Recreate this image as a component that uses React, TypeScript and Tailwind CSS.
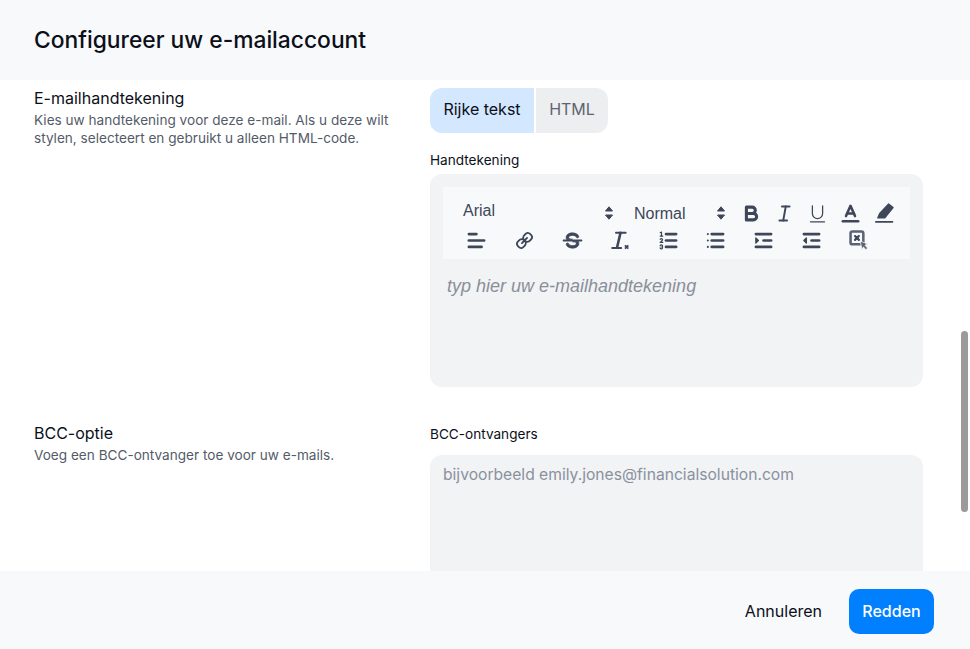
import React from "react";

const C = "#3d4759";
const s = { stroke: C, strokeWidth: 2, strokeLinecap: "round" as const, strokeLinejoin: "round" as const, fill: "none" };
const thin = { ...s, strokeWidth: 1 };

function Ic({ children }: { children: React.ReactNode }) {
  return (
    <svg viewBox="0 0 18 18" className="w-[23px] h-[23px] shrink-0">
      {children}
    </svg>
  );
}

const Bold = () => (
  <Ic>
    <path {...s} strokeWidth={2.4} d="M5,4H9.5A2.5,2.5,0,0,1,12,6.5v0A2.5,2.5,0,0,1,9.5,9H5V4Z" />
    <path {...s} strokeWidth={2.4} d="M5,9h5.5A2.5,2.5,0,0,1,13,11.5v0A2.5,2.5,0,0,1,10.5,14H5V9Z" />
  </Ic>
);
const Italic = () => (
  <Ic>
    <line {...s} strokeWidth={1.5} x1="7" x2="13" y1="3.5" y2="3.5" />
    <line {...s} strokeWidth={1.5} x1="5" x2="11" y1="14.5" y2="14.5" />
    <line {...s} strokeWidth={1.5} x1="8" x2="10" y1="14.5" y2="3.5" />
  </Ic>
);
const Underline = () => (
  <Ic>
    <path {...thin} d="M5,3V9a4,4,0,0,0,4,4H9a4,4,0,0,0,4-4V3" />
    <rect fill={C} height="1" rx=".5" ry=".5" width="12" x="3" y="15" />
  </Ic>
);
const Color = () => (
  <Ic>
    <line {...s} x1="3" x2="15" y1="15" y2="15" />
    <polyline {...s} points="5.5 11 9 3 12.5 11" />
    <line {...s} x1="11.63" x2="6.38" y1="9" y2="9" />
  </Ic>
);
const Highlight = () => (
  <Ic>
    <line {...s} strokeWidth={1.4} x1="3" x2="16" y1="15.5" y2="15.5" />
    <polygon fill={C} stroke={C} strokeLinejoin="round" strokeWidth={1} points="13,1.5 16.5,4.3 10,12.5 4.5,12.5 6,9" />
  </Ic>
);
const Align = () => (
  <Ic>
    <line {...s} x1="3" x2="15" y1="9" y2="9" />
    <line {...s} x1="3" x2="13" y1="14" y2="14" />
    <line {...s} x1="3" x2="9" y1="4" y2="4" />
  </Ic>
);
const LinkI = () => (
  <Ic>
    <g transform="translate(18,0) scale(-1,1)">
      <line {...s} strokeWidth={1.5} x1="7" x2="11" y1="7" y2="11" />
      <path {...s} strokeWidth={1.5} d="M8.9,4.577a3.476,3.476,0,0,1,.36,4.679A3.476,3.476,0,0,1,4.577,8.9C3.185,7.5,2.035,6.4,4.217,4.217S7.5,3.185,8.9,4.577Z" />
      <path {...s} strokeWidth={1.5} d="M13.423,9.1a3.476,3.476,0,0,0-4.679-.36,3.476,3.476,0,0,0,.36,4.679c1.392,1.392,2.5,2.542,4.679.36S14.815,10.5,13.423,9.1Z" />
    </g>
  </Ic>
);
const Strike = () => (
  <Ic>
    <line {...s} strokeWidth={1.4} x1="16" x2="2" y1="9" y2="9" />
    <path fill={C} stroke={C} strokeWidth={0.5} d="M9.007,8C6.542,7.791,6,7.519,6,6.5,6,5.792,7.283,5,9,5c1.571,0,2.765.679,2.969,1.309a1,1,0,0,0,1.9-.617C13.356,4.106,11.354,3,9,3,6.2,3,4,4.538,4,6.5a3.2,3.2,0,0,0,.5,1.843Z" />
    <path fill={C} stroke={C} strokeWidth={0.5} d="M8.984,10C11.457,10.208,12,10.479,12,11.5c0,.708-1.283,1.5-3,1.5-1.571,0-2.765-.679-2.969-1.309a1,1,0,1,0-1.9.617C4.644,13.894,6.646,15,9,15c2.8,0,5-1.538,5-3.5a3.2,3.2,0,0,0-.5-1.843Z" />
  </Ic>
);
const Clean = () => (
  <Ic>
    <line {...s} strokeWidth={1.6} x1="5.5" x2="13" y1="3" y2="3" />
    <line {...s} strokeWidth={2} x1="6.3" x2="9" y1="14.5" y2="3" />
    <line {...s} strokeWidth={1.6} x1="2.5" x2="9.5" y1="14.8" y2="14.8" />
    <path stroke={C} strokeWidth={1.4} d="M12.5 12.8l2.6 2.6M15.1 12.8l-2.6 2.6" fill="none" />
  </Ic>
);
const Ordered = () => (
  <Ic>
    <line {...s} x1="7" x2="15" y1="4" y2="4" />
    <line {...s} x1="7" x2="15" y1="9" y2="9" />
    <line {...s} x1="7" x2="15" y1="14" y2="14" />
    <line {...thin} x1="2.5" x2="4.5" y1="5.5" y2="5.5" />
    <path fill={C} d="M3.5,6A0.5,0.5,0,0,1,3,5.5V3.085l-0.276.138A0.5,0.5,0,0,1,2.053,3c-0.124-.247-0.023-0.324.224-0.447l1-.5A0.5,0.5,0,0,1,4,2.5v3A0.5,0.5,0,0,1,3.5,6Z" />
    <path {...thin} d="M4.5,10.5h-2c0-.234,1.85-1.076,1.85-2.234A0.959,0.959,0,0,0,2.5,8.156" />
    <path {...thin} d="M2.5,14.846a0.959,0.959,0,0,0,1.85-.109A0.7,0.7,0,0,0,3.75,14a0.688,0.688,0,0,0,.6-0.736,0.959,0.959,0,0,0-1.85-.109" />
  </Ic>
);
const Bullet = () => (
  <Ic>
    <line {...s} x1="6" x2="15" y1="4" y2="4" />
    <line {...s} x1="6" x2="15" y1="9" y2="9" />
    <line {...s} x1="6" x2="15" y1="14" y2="14" />
    <line {...s} strokeWidth={1.6} x1="3" x2="3" y1="4" y2="4" />
    <line {...s} strokeWidth={1.6} x1="3" x2="3" y1="9" y2="9" />
    <line {...s} strokeWidth={1.6} x1="3" x2="3" y1="14" y2="14" />
  </Ic>
);
const Indent = () => (
  <Ic>
    <line {...s} x1="3" x2="15" y1="14" y2="14" />
    <line {...s} x1="3" x2="15" y1="4" y2="4" />
    <line {...s} x1="9" x2="15" y1="9" y2="9" />
    <polygon fill={C} stroke={C} strokeWidth={1} strokeLinejoin="round" points="3 7 3 11 5 9" />
  </Ic>
);
const Outdent = () => (
  <Ic>
    <line {...s} x1="3" x2="15" y1="14" y2="14" />
    <line {...s} x1="3" x2="15" y1="4" y2="4" />
    <line {...s} x1="9" x2="15" y1="9" y2="9" />
    <polygon fill={C} stroke={C} strokeWidth={1} strokeLinejoin="round" points="5 7 5 11 3 9" />
  </Ic>
);
const Embed = () => (
  <Ic>
    <rect {...s} stroke="#5a6475" strokeWidth={2} x="2" y="2" width="10" height="10" rx="1.5" />
    <path {...s} strokeWidth={1.7} d="M5.5 5.5l3 3M8.5 5.5l-3 3" />
    <path fill="#5a6475" stroke="#f8f9fb" strokeWidth={0.6} d="M9.5 9.5l6 2.2-2.2 1 2 2.2-1.3 1.3-2-2.2-1 2.2z" />
  </Ic>
);
const Updown = () => (
  <svg viewBox="0 0 10 16" className="w-[10px] h-[16px] shrink-0">
    <polygon fill={C} stroke={C} strokeLinejoin="round" points="1.5,6 5,1.8 8.5,6" />
    <polygon fill={C} stroke={C} strokeLinejoin="round" points="1.5,10 5,14.2 8.5,10" />
  </svg>
);

function Cell({ children }: { children: React.ReactNode }) {
  return <div className="flex items-center justify-center w-[47.8px]">{children}</div>;
}

export default function App() {
  return (
    <div className="relative w-[970px] h-[649px] flex flex-col overflow-hidden bg-white font-['Inter',sans-serif] text-[#0b0f19]">
      <header className="h-20 shrink-0 bg-[#f8f9fb] flex items-center px-[34px]">
        <h1 className="text-[22.8px] font-medium leading-none">Configureer uw e-mailaccount</h1>
      </header>

      <main className="flex-1 min-h-0 overflow-hidden flex flex-col pl-[34px] pr-[47px] pt-2">
        <section className="flex shrink-0">
          <div className="w-[396px] shrink-0">
            <h2 className="text-[16px] leading-5">E-mailhandtekening</h2>
            <p className="text-[13.6px] leading-[18px] text-[#545b68] mt-[3px] w-[366px]">
              Kies uw handtekening voor deze e-mail. Als u deze wilt stylen, selecteert en gebruikt u alleen HTML-code.
            </p>
          </div>
          <div className="flex-1">
            <div className="flex h-[45px] w-[178px] text-[16px]">
              <button className="w-[104px] pb-[3px] rounded-l-xl bg-[#d3e8ff] text-[#0b0f19]">Rijke tekst</button>
              <button className="ml-[2px] pb-[3px] flex-1 rounded-r-xl bg-[#eceef0] text-[#5c6470]">HTML</button>
            </div>
            <label className="block text-[13.6px] leading-4 mt-[19px]">Handtekening</label>
            <div className="mt-[6px] h-[213px] rounded-xl bg-[#f1f3f5] p-[13px]">
              <div className="h-[72px] bg-[#f8f9fb] flex flex-col font-['Liberation_Sans',sans-serif] text-[#3d4759]">
                <div className="flex items-center h-[36px] mt-[8px]">
                  <div className="w-[171px] pl-5 flex items-center justify-between">
                    <span className="text-[16px] -mt-[5px]">Arial</span>
                    <Updown />
                  </div>
                  <div className="w-[112px] pl-5 flex items-center justify-between">
                    <span className="text-[16px] mt-[2px]">Normal</span>
                    <Updown />
                  </div>
                  <div className="flex items-center ml-[14px] gap-[10px]">
                    <Bold />
                    <Italic />
                    <Underline />
                    <Color />
                    <Highlight />
                  </div>
                </div>
                <div className="flex items-center h-[36px] pl-[10px] -mt-[9px]">
                  <Cell><Align /></Cell>
                  <Cell><LinkI /></Cell>
                  <Cell><Strike /></Cell>
                  <Cell><Clean /></Cell>
                  <Cell><Ordered /></Cell>
                  <Cell><Bullet /></Cell>
                  <Cell><Indent /></Cell>
                  <Cell><Outdent /></Cell>
                  <Cell><Embed /></Cell>
                </div>
              </div>
              <p className="mt-[17px] ml-[4px] text-[18px] italic leading-5 text-[#8a8f98] font-['Liberation_Sans',sans-serif]">
                typ hier uw e-mailhandtekening
              </p>
            </div>
          </div>
        </section>

        <section className="flex shrink-0 mt-[38px]">
          <div className="w-[396px] shrink-0">
            <h2 className="text-[16px] leading-5 -mt-[2px]">BCC-optie</h2>
            <p className="text-[13.6px] leading-[18px] text-[#545b68] mt-[3px]">Voeg een BCC-ontvanger toe voor uw e-mails.</p>
          </div>
          <div className="flex-1">
            <label className="block text-[13.6px] leading-4 mt-[1px]">BCC-ontvangers</label>
            <div className="mt-[13px] h-[160px] rounded-xl bg-[#f1f3f5] px-[13px] py-[10px] text-[15.65px] leading-5 text-[#8a919e]">
              bijvoorbeeld emily.jones@financialsolution.com
            </div>
          </div>
        </section>
      </main>

      <footer className="h-[78px] shrink-0 bg-[#f8f9fb] flex items-center justify-end pr-9 pt-[2px] gap-[27px] text-[16px]">
        <button className="text-[#0b0f19]">Annuleren</button>
        <button className="w-[85px] h-[45px] rounded-[10px] bg-[#0080ff] text-white font-medium">Redden</button>
      </footer>

      <div className="absolute left-[961px] top-[331px] w-[7px] h-[181px] rounded-full bg-[#9a9a9a]" />
    </div>
  );
}
